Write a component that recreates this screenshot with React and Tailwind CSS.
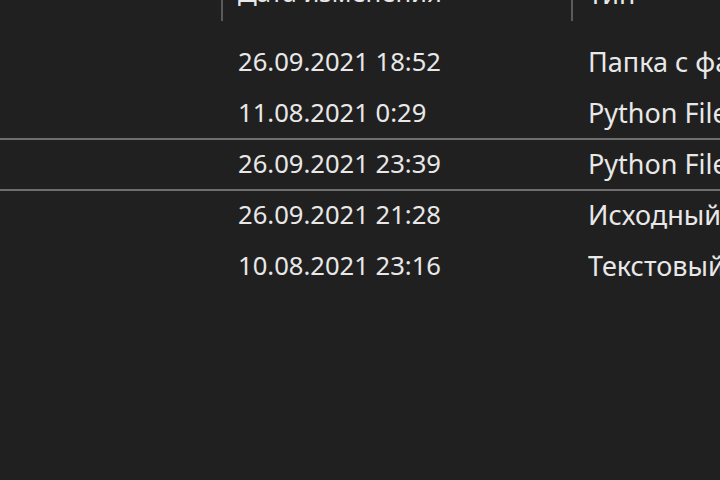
export default function App() {
  const rows = [
    ["26.09.2021 18:52", "Папка с файлами"],
    ["11.08.2021 0:29", "Python File"],
    ["26.09.2021 23:39", "Python File"],
    ["26.09.2021 21:28", "Исходный файл"],
    ["10.08.2021 23:16", "Текстовый документ"],
  ];
  return (
    <div
      className="w-[720px] h-[480px] overflow-hidden bg-[#202020] text-[#e8e8e8] text-[25.6px]"
      style={{ fontFamily: '"Noto Sans", "Open Sans", sans-serif' }}
    >
      <div className="flex h-[37px] items-start">
        <div className="w-[221px] shrink-0" />
        <div className="w-[350px] shrink-0 flex items-start">
          <div className="w-[2px] h-[21px] bg-[#5a5a5a]" />
          <div className="pl-[15px] leading-none -mt-[20px] whitespace-nowrap">Дата изменения</div>
        </div>
        <div className="flex-1 flex items-start">
          <div className="w-[2px] h-[21px] bg-[#5a5a5a]" />
          <div className="pl-[15px] leading-none -mt-[20px] whitespace-nowrap text-[27px]">Тип</div>
        </div>
      </div>
      {rows.map(([d, t], i) => (
        <div
          key={i}
          className={
            "flex items-center whitespace-nowrap " +
            (i === 2 ? "h-[53px] border-y-2 border-[#6e6e6e] -my-px" : "h-[51px]")
          }
        >
          <div className="w-[238px] shrink-0" />
          <div className="w-[350px] shrink-0">{d}</div>
          <div className="flex-1 overflow-hidden text-[27px]">{t}</div>
        </div>
      ))}
    </div>
  );
}
